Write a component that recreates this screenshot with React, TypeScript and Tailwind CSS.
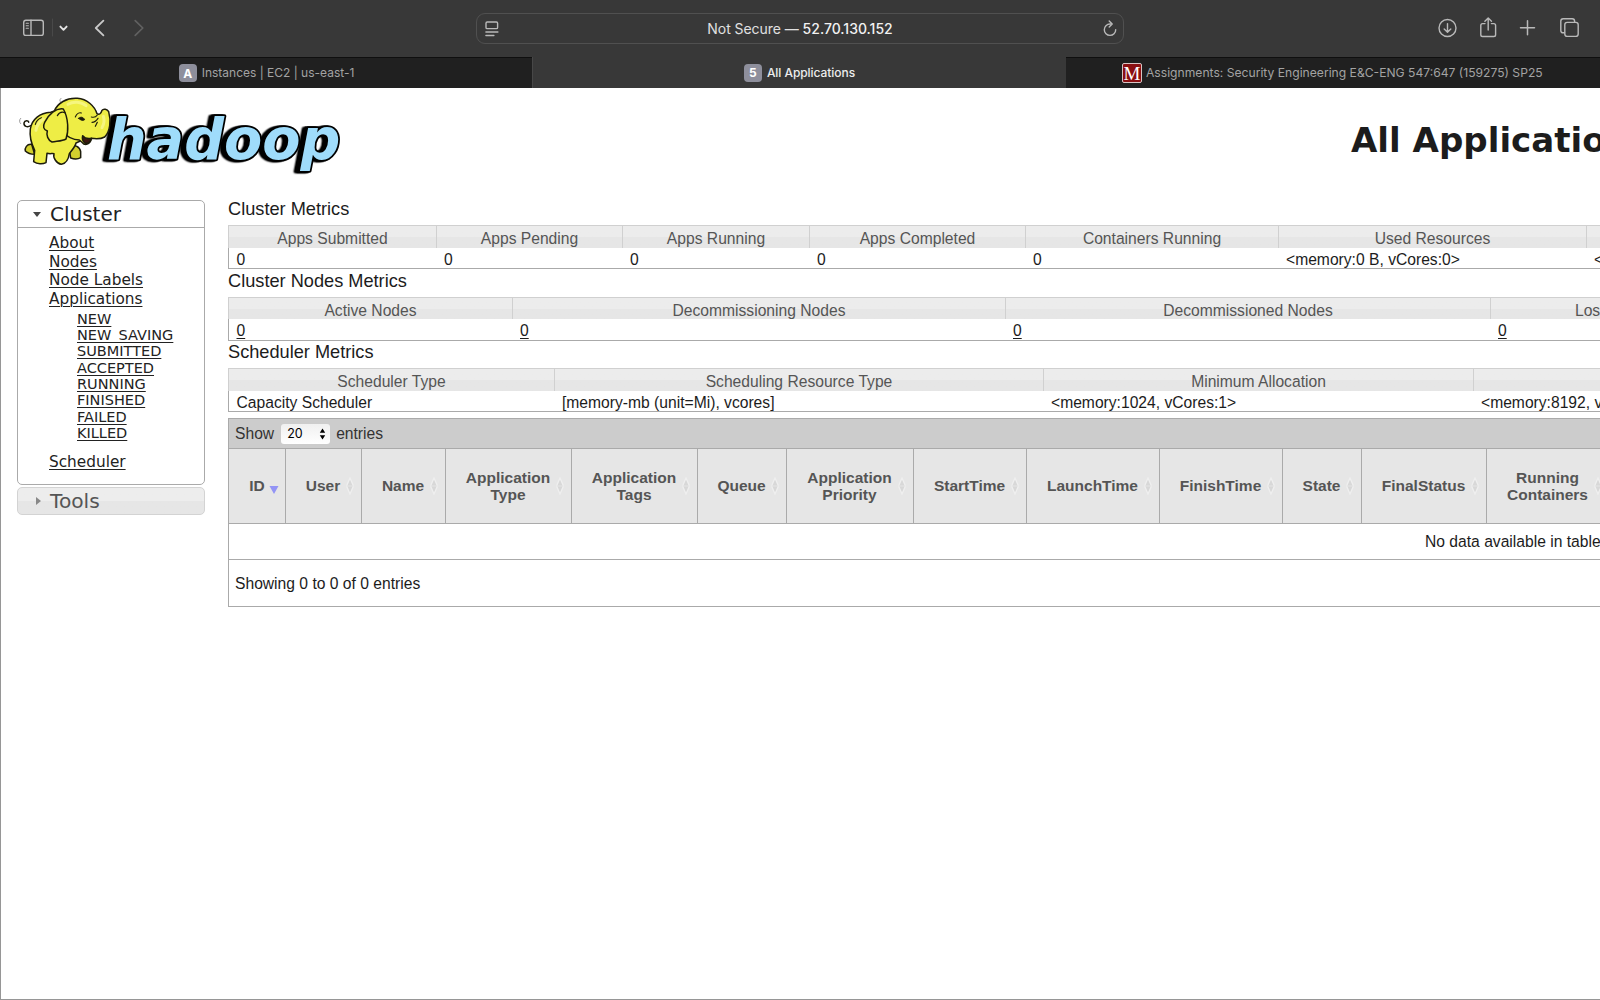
import type { ReactNode } from "react";

type Column = { label: string; value: string; width: string };

const clusterMetrics: Column[] = [
  { label: "Apps Submitted", value: "0", width: "w-[208px]" },
  { label: "Apps Pending", value: "0", width: "w-[186px]" },
  { label: "Apps Running", value: "0", width: "w-[187px]" },
  { label: "Apps Completed", value: "0", width: "w-[216px]" },
  { label: "Containers Running", value: "0", width: "w-[253px]" },
  { label: "Used Resources", value: "<memory:0 B, vCores:0>", width: "w-[308px]" },
  { label: "", value: "<memory:0 B, vCores:0>", width: "w-[308px]" },
];

const nodeMetrics: Column[] = [
  { label: "Active Nodes", value: "0", width: "w-[284px]" },
  { label: "Decommissioning Nodes", value: "0", width: "w-[493px]" },
  { label: "Decommissioned Nodes", value: "0", width: "w-[485px]" },
  { label: "Lost Nodes", value: "0", width: "w-[248px]" },
];

const schedulerMetrics: Column[] = [
  { label: "Scheduler Type", value: "Capacity Scheduler", width: "w-[326px]" },
  { label: "Scheduling Resource Type", value: "[memory-mb (unit=Mi), vcores]", width: "w-[489px]" },
  { label: "Minimum Allocation", value: "<memory:1024, vCores:1>", width: "w-[430px]" },
  { label: "", value: "<memory:8192, vCores:4>", width: "w-[430px]" },
];

const appColumns = [
  { lines: ["User"], width: "w-[76px]" },
  { lines: ["Name"], width: "w-[84px]" },
  { lines: ["Application", "Type"], width: "w-[126px]" },
  { lines: ["Application", "Tags"], width: "w-[126px]" },
  { lines: ["Queue"], width: "w-[89px]" },
  { lines: ["Application", "Priority"], width: "w-[127px]" },
  { lines: ["StartTime"], width: "w-[113px]" },
  { lines: ["LaunchTime"], width: "w-[133px]" },
  { lines: ["FinishTime"], width: "w-[123px]" },
  { lines: ["State"], width: "w-[79px]" },
  { lines: ["FinalStatus"], width: "w-[125px]" },
  { lines: ["Running", "Containers"], width: "w-[123px]" },
];

const appStates = ["NEW", "NEW_SAVING", "SUBMITTED", "ACCEPTED", "RUNNING", "FINISHED", "FAILED", "KILLED"];

function Toolbar() {
  return (
    <div className="flex h-[57px] items-center bg-[#383838] text-[#b9b9b9]">
      <svg className="mb-px ml-[22px] h-6 w-[130px] shrink-0" viewBox="0 0 130 24" fill="none" stroke="currentColor" strokeWidth="1.4" strokeLinecap="round" strokeLinejoin="round">
        <rect x="1.7" y="4.2" width="19.6" height="15.2" rx="2.2" />
        <path d="M9 4.3v15" />
        <path d="M4.2 7.2h2.2M4.2 9.7h2.2M4.2 12.2h2.2" strokeWidth="1.1" />
        <path d="M30.5 3v17" stroke="#494949" strokeWidth="1" />
        <path d="M38.4 10.6l3.1 3.2 3.1-3.2" stroke="#e4e4e4" strokeWidth="1.9" />
        <path d="M81.4 4.6l-7.6 7.4 7.6 7.4" stroke="#c9c9c9" strokeWidth="1.8" />
        <path d="M113.2 4.6l7.6 7.4-7.6 7.4" stroke="#616161" strokeWidth="1.7" />
      </svg>
      <div className="ml-[324px] flex h-[31px] w-[648px] shrink-0 items-center rounded-[9px] border border-[#505050]">
        <svg className="ml-[8px] h-4 w-[14px]" viewBox="0 0 14 16" fill="none" stroke="currentColor" strokeWidth="1.4" strokeLinecap="round">
          <rect x="1" y="1" width="11.6" height="6.6" rx="1.2" />
          <path d="M.9 11h12M.9 14.5h8" />
        </svg>
        <div className="grow whitespace-pre pr-[2px] pt-px text-center font-[Inter] text-[14px] leading-5 text-[#e0e0e0]">
          <span className="tracking-[-0.05px]">Not Secure — </span>
          <span className="font-medium text-[#f1f1f1]">52.70.130.152</span>
        </div>
        <svg className="mr-[6px] h-[18px] w-[14px]" viewBox="0 0 14 18" fill="none" stroke="currentColor" strokeWidth="1.4" strokeLinecap="round" strokeLinejoin="round">
          <path d="M8.4 4H7A5.7 5.7 0 1 0 12.7 9.7" />
          <path d="M6.2 1l3 3-3 3" />
        </svg>
      </div>
      <svg className="mb-px ml-[312px] h-6 w-[150px] shrink-0" viewBox="0 0 150 24" fill="none" stroke="currentColor" strokeWidth="1.4" strokeLinecap="round" strokeLinejoin="round">
        <circle cx="11.5" cy="12" r="8.5" />
        <path d="M11.5 7.6v8.4M8.2 12.9l3.3 3.3 3.3-3.3" />
        <path d="M49 7.6h-2.4a1.8 1.8 0 0 0-1.8 1.8v9.3a1.8 1.8 0 0 0 1.8 1.8h11.2a1.8 1.8 0 0 0 1.8-1.8V9.4a1.8 1.8 0 0 0-1.8-1.8h-2.4" />
        <path d="M52.2 14V2.2M48.9 5.2l3.3-3.3 3.3 3.3" />
        <path d="M91.5 4.8v14M84.5 11.8h14" strokeWidth="1.5" />
        <rect x="128.8" y="6.4" width="13.4" height="14" rx="2.4" />
        <path d="M128.6 16.8h-1.4a2.4 2.4 0 0 1-2.4-2.4V5.2a2.4 2.4 0 0 1 2.4-2.4h9a2.4 2.4 0 0 1 2.4 2.4v1" />
      </svg>
    </div>
  );
}

function Badge({ children }: { children: ReactNode }) {
  return (
    <span className="flex size-[18px] items-center justify-center rounded-[4px] bg-[#8e8f9c] pt-px font-[Inter] text-[12px] font-bold leading-none text-white">
      {children}
    </span>
  );
}

function TabBar() {
  return (
    <div className="flex h-[31px] shrink-0 font-[Inter] text-[12px] leading-[18px] text-[#a3a3a3]">
      <div className="flex w-[532px] items-center justify-center gap-[5px] border-t border-[#0f0f0f] bg-[#202020] pl-px">
        <Badge>A</Badge>
        <span>Instances | EC2 | us-east-1</span>
      </div>
      <div className="flex w-[534px] items-center justify-center gap-[5px] border-l border-[#474747] bg-[#383838] text-[#ededed]">
        <Badge>5</Badge>
        <span className="font-medium tracking-[-0.05px]">All Applications</span>
      </div>
      <div className="flex w-[534px] items-center border-t border-[#0f0f0f] bg-[#202020] pl-[56px]">
        <span className="flex h-[20px] w-[20px] items-center justify-center overflow-hidden rounded-[2px] border border-[#d8c4c4] bg-[#8a0f12] font-['Liberation_Serif'] text-[19px] leading-none text-white">
          M
        </span>
        <span className="ml-[4px] whitespace-nowrap text-[12.14px]">
          Assignments: Security Engineering E&amp;C-ENG 547:647 (159275) SP25
        </span>
      </div>
    </div>
  );
}

function HadoopLogo() {
  return (
    <svg className="h-[106px] w-[360px] shrink-0" viewBox="0 12 1080 318" role="img" aria-label="hadoop">
      <text
        className="[filter:drop-shadow(-7px_1px_0_#000)_drop-shadow(-7px_1px_0_#000)]"
        x="321"
        y="222"
        textLength="700"
        lengthAdjust="spacingAndGlyphs"
        fontFamily="DejaVu Sans"
        fontWeight="700"
        fontStyle="italic"
        fontSize="170"
        strokeLinejoin="round"
        fill="#9fdcfb"
        stroke="#000"
        strokeWidth="11"
        paintOrder="stroke"
      >
        hadoop
      </text>
      <g fill="#eeed45" stroke="#1d1c0c" strokeWidth="4.5" strokeLinecap="round" strokeLinejoin="round">
        <path d="M92 122C82 128 71 124 72 114C74 105 86 106 86 112" fill="none" />
        <path d="M62 116C58 112 57 105 62 100M183 40C178 44 179 48 182 51" fill="none" stroke="#999" strokeWidth="3" />
        <path d="M95 178C80 176 74 190 76 198C84 206 94 208 104 208Z" fill="#d3d02e" />
        <path d="M206 180C226 178 240 186 242 200V218C232 224 220 222 212 219Z" fill="#d3d02e" />
        <path d="M152 82C120 84 96 102 91 132C88 156 96 180 104 196L101 230C112 238 128 238 138 233L141 205C150 207 156 205 162 206C158 218 170 236 184 238C198 236 206 220 208 206C216 196 226 184 228 174L258 160L190 70Z" />
        <path d="M162 80C172 54 200 38 232 40C262 42 284 64 291 86C298 90 303 86 306 76C310 70 322 72 326 80C334 108 330 140 314 156C300 164 286 162 274 160C272 174 262 181 251 177C246 172 242 168 238 165C218 165 200 154 190 140Z" />
        <path d="M248 152C254 160 264 162 274 160C273 170 264 178 254 174C248 168 246 160 248 152Z" fill="#3d1710" />
        <path d="M190 72C168 68 146 88 134 112C128 124 130 134 142 138C138 150 144 166 156 171C172 168 188 168 198 162C206 140 206 100 190 72Z" />
        <path d="M172 92C178 82 188 80 196 84M226 96C230 86 238 82 244 84M274 96C282 98 288 96 292 90M276 112C284 112 290 106 294 100M286 124L292 112M124 98C114 102 108 110 106 118" fill="none" strokeWidth="3.5" />
        <path d="M236 100C242 94 250 96 254 104C248 108 242 106 236 100Z" fill="#1d1c0c" strokeWidth="3" />
      </g>
      <g fill="none" stroke="#fbfaa0" strokeWidth="9" strokeLinecap="round" opacity=".65">
        <path d="M204 58C220 48 244 50 258 62M108 136C110 120 122 108 130 102M310 94C314 106 312 118 306 128" />
      </g>
    </svg>
  );
}

function SideLink({ children }: { children: ReactNode }) {
  return (
    <a className="block h-[18.4px] text-[15.3px] leading-[18.4px] underline decoration-1 underline-offset-[2px]">{children}</a>
  );
}

function Sidebar() {
  return (
    <nav className="ml-[16px] w-[188px] shrink-0 pt-[10px] font-['DejaVu_Sans'] text-[#222]">
      <div className="h-[285px] rounded-[5px] border border-[#aaa]">
        <div className="flex h-[27px] items-center border-b border-[#aaa] pl-[15px]">
          <span className="border-x-[4px] border-t-[5px] border-x-transparent border-t-[#454545]" />
          <span className="ml-[9px] text-[20px] leading-none">Cluster</span>
        </div>
        <div className="pl-[31px] pt-[6.4px]">
          <SideLink>About</SideLink>
          <SideLink>Nodes</SideLink>
          <SideLink>Node Labels</SideLink>
          <SideLink>Applications</SideLink>
          <div className="mb-[12px] mt-[2.8px] pl-[28px]">
            {appStates.map((s) => (
              <a key={s} className="block h-[16.3px] text-[14.5px] leading-[16.3px] underline decoration-1 underline-offset-[2px]">
                {s}
              </a>
            ))}
          </div>
          <SideLink>Scheduler</SideLink>
        </div>
      </div>
      <div className="mt-[2px] flex h-[28px] items-center rounded-[5px] border border-[#d3d3d3] bg-linear-to-b from-[#ededed] from-50% to-[#e6e6e6] to-50% pl-[18px] text-[#555]">
        <span className="border-y-[4px] border-l-[5px] border-y-transparent border-l-[#888]" />
        <span className="ml-[9px] text-[20.2px] leading-none">Tools</span>
      </div>
    </nav>
  );
}

function Heading({ children, first }: { children: ReactNode; first?: boolean }) {
  return (
    <h2 className={first ? "h-[33px] text-[18.2px] leading-[35px]" : "h-[28px] text-[18.2px] leading-[25px]"}>{children}</h2>
  );
}

function MetricsTable({ columns, linked, short }: { columns: Column[]; linked?: boolean; short?: boolean }) {
  return (
    <div className={short ? "flex h-[44px] w-[1680px] overflow-hidden border-b border-[#aaa] -mb-px" : "flex h-[44px] w-[1680px] overflow-hidden border-b border-[#aaa]"}>
      {columns.map((c, i) => (
        <div key={c.label + i} className={`${c.width} flex shrink-0 flex-col`}>
          <div
            className={`${short ? "h-[22px]" : "h-[23px]"} shrink-0 border-l border-t border-[#d0d0d0] bg-linear-to-b from-[#ececec] from-50% to-[#e6e6e6] to-50% text-center leading-[25px] text-[#555]`}
          >
            {c.label}
          </div>
          <div className={`${i === 0 ? "border-l border-[#aaa] pl-[7.5px]" : "pl-[8px]"} grow whitespace-nowrap leading-[24px]`}>
            <span className={linked ? "underline decoration-1 underline-offset-[2px]" : ""}>{c.value}</span>
          </div>
        </div>
      ))}
    </div>
  );
}

function SortIcon() {
  return (
    <svg className="absolute right-[7px] top-[28px] h-[18px] w-[8px]" viewBox="0 0 8 18">
      <path d="M4 1L7 8V10L4 17L1 10V8Z" fill="#d8d8d8" stroke="#efefef" strokeWidth="1.3" />
      <path d="M1 9h6" stroke="#e6e6e6" />
    </svg>
  );
}

function ApplicationsTable() {
  return (
    <div className="mt-[6px] h-[189px] w-[1680px] border border-[#aaa]">
      <div className="flex h-[29px] items-center bg-[#ccc] pl-[6px] text-[#333]">
        <span>Show</span>
        <div className="ml-[7px] flex h-[20px] w-[49px] items-center rounded-[3px] bg-linear-to-b from-[#f0f0f0] to-white pl-[6px] font-[Inter] text-[12.5px] text-black">
          <span className="w-[32px] pt-[2px]">20</span>
          <svg className="h-[12px] w-[7px]" viewBox="0 0 7 12">
            <path d="M3.5 .5L6.2 4.8H.8ZM3.5 11.5L6.2 7.2H.8Z" />
          </svg>
        </div>
        <span className="ml-[6px]">entries</span>
      </div>
      <div className="flex h-[76px] border-y border-[#aaa] bg-[#e6e6e6] text-[15.5px] font-bold leading-[17.5px] text-[#555]">
        <div className="relative flex w-[56px] shrink-0 items-center justify-center">
          ID
          <svg className="absolute right-[6px] top-[37px] h-[8px] w-[10px]" viewBox="0 0 10 8">
            <path d="M.5 0h9L5 8z" fill="#9394f5" />
          </svg>
        </div>
        {appColumns.map((c) => (
          <div key={c.lines.join(" ")} className={`${c.width} relative flex shrink-0 flex-col items-center justify-center border-l border-[#aaa] pr-px`}>
            {c.lines.map((l) => (
              <span key={l}>{l}</span>
            ))}
            <SortIcon />
          </div>
        ))}
      </div>
      <div className="h-[36px] border-b border-[#aaa] pl-[1196px] leading-[36px]">No data available in table</div>
      <div className="pl-[6px] leading-[47px]">Showing 0 to 0 of 0 entries</div>
    </div>
  );
}

export default function App() {
  return (
    <div className="flex h-[1000px] w-[1600px] flex-col overflow-hidden bg-white">
      <Toolbar />
      <TabBar />
      <div className="grow overflow-hidden border-b border-l border-[#969696] text-[#1c1c1c]">
        <div className="flex h-[102px] w-[1900px] items-start">
          <div className="-ml-px w-[1351px] pt-px">
            <HadoopLogo />
          </div>
          <h1 className="pt-[30px] font-['DejaVu_Sans'] text-[34.1px] font-bold leading-[44px]">All Applications</h1>
        </div>
        <div className="flex w-[1920px]">
          <Sidebar />
          <main className="ml-[23px] pt-[2px] font-['Liberation_Sans'] text-[15.65px]">
            <Heading first>Cluster Metrics</Heading>
            <MetricsTable columns={clusterMetrics} />
            <Heading>Cluster Nodes Metrics</Heading>
            <MetricsTable columns={nodeMetrics} linked short />
            <Heading>Scheduler Metrics</Heading>
            <MetricsTable columns={schedulerMetrics} />
            <ApplicationsTable />
          </main>
        </div>
      </div>
    </div>
  );
}
